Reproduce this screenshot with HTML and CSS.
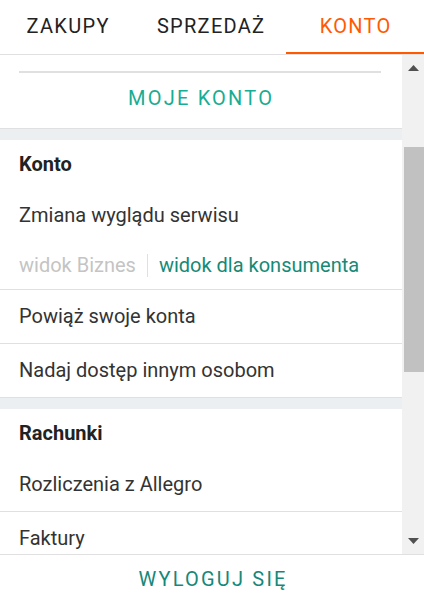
FILE: index.html
```html
<!DOCTYPE html>
<html lang="pl">
<head>
  <meta charset="UTF-8" />
  <meta name="viewport" content="width=device-width, initial-scale=1.0"/>
  <title>Moje konto</title>
  <link rel="stylesheet" href="styles.css">
</head>
<body>
  <div class="tabs">
    <a class="tab" href="#">Zakupy</a>
    <a class="tab" href="#">Sprzedaż</a>
    <a class="tab active" href="#">Konto</a>
  </div>

  <div class="main">
    <div class="panel">
      <div class="top">
        <div class="top-rule"></div>
        <a class="top-link" href="#">Moje konto</a>
      </div>

      <div class="section">
        <div class="section-title">Konto</div>
        <div class="item plain">Zmiana wyglądu serwisu</div>
        <div class="item views">
          <span class="view-off">widok Biznes</span>
          <span class="view-sep"></span>
          <a class="view-on" href="#">widok dla konsumenta</a>
        </div>
        <a class="item" href="#">Powiąż swoje konta</a>
        <a class="item last" href="#">Nadaj dostęp innym osobom</a>
      </div>

      <div class="section">
        <div class="section-title">Rachunki</div>
        <a class="item" href="#">Rozliczenia z Allegro</a>
        <a class="item" href="#">Faktury</a>
        <a class="item" href="#">Historia wpłat</a>
      </div>
    </div>

    <div class="scrollbar">
      <div class="scroll-btn up">
        <svg width="11" height="6" viewBox="0 0 11 6"><polygon points="0,6 11,6 5.5,0" fill="#505050"/></svg>
      </div>
      <div class="scroll-track">
        <div class="scroll-thumb"></div>
      </div>
      <div class="scroll-btn down">
        <svg width="11" height="6" viewBox="0 0 11 6"><polygon points="0,0 11,0 5.5,6" fill="#505050"/></svg>
      </div>
    </div>
  </div>

  <div class="footer">
    <a class="logout" href="#">Wyloguj się</a>
  </div>
</body>
</html>
```

FILE: styles.css
```css
* {
  box-sizing: border-box;
}
body {
  margin: 0;
  width: 424px;
  height: 594px;
  overflow: hidden;
  font-family: Roboto, 'Open Sans', sans-serif;
  font-size: 20px;
  color: #333;
  background: #fff;
  display: flex;
  flex-direction: column;
}
a {
  text-decoration: none;
  color: inherit;
}
.tabs {
  display: grid;
  grid-template-columns: 135px 151px 1fr;
  border-bottom: 1px solid #e0e0e0;
  flex: none;
}
.tab {
  text-align: center;
  line-height: 52px;
  text-transform: uppercase;
  letter-spacing: 1.3px;
  padding-left: 1.3px;
  color: #222;
  border-bottom: 2px solid transparent;
}
.tab.active {
  color: #ff5a00;
  border-bottom-color: #ff5a00;
}
.main {
  display: flex;
  height: 499px;
  flex: none;
}
.panel {
  flex: 1;
  overflow: hidden;
  background: #eceff1;
}
.top {
  background: #fff;
  padding: 16px 21px 4px 19px;
  border-bottom: 1px solid #e0e0e0;
  margin-bottom: 11px;
}
.top-rule {
  height: 2px;
  background: #e0e0e0;
}
.top-link {
  display: block;
  text-align: center;
  line-height: 51px;
  text-transform: uppercase;
  letter-spacing: 2.2px;
  padding-left: 2.2px;
  color: #17ad94;
}
.section {
  background: #fff;
  border-bottom: 1px solid #e0e0e0;
  margin-bottom: 11px;
}
.section-title {
  padding: 0 19px;
  line-height: 49px;
  font-weight: 700;
  color: #222;
}
.item {
  display: block;
  padding: 0 19px;
  line-height: 53px;
  border-bottom: 1px solid #e0e0e0;
}
.item.plain {
  line-height: 52px;
  border-bottom: none;
}
.item.last {
  border-bottom: none;
}
.views {
  display: flex;
  align-items: center;
  height: 48px;
  line-height: 26px;
  box-sizing: content-box;
}
.view-off {
  color: #c4c4c4;
}
.view-sep {
  width: 1px;
  height: 23px;
  background: #e0e0e0;
  margin: 0 11px;
}
.view-on {
  color: #148a77;
}
.scrollbar {
  width: 22px;
  background: #f1f1f1;
  display: flex;
  flex-direction: column;
}
.scroll-btn {
  height: 22px;
  display: flex;
  justify-content: center;
}
.scroll-btn.up {
  align-items: flex-end;
  padding-bottom: 6px;
}
.scroll-btn.down {
  align-items: flex-start;
  padding-top: 6px;
}
.scroll-track {
  flex: 1;
  padding-left: 2px;
}
.scroll-thumb {
  margin-top: 70px;
  height: 225px;
  background: #c1c1c1;
}
.footer {
  border-top: 1px solid #e0e0e0;
  text-align: center;
  flex: none;
  padding-top: 10px;
}
.logout {
  display: block;
  line-height: 28px;
  text-transform: uppercase;
  letter-spacing: 2.2px;
  padding-left: 2.2px;
  color: #16887a;
}
```
